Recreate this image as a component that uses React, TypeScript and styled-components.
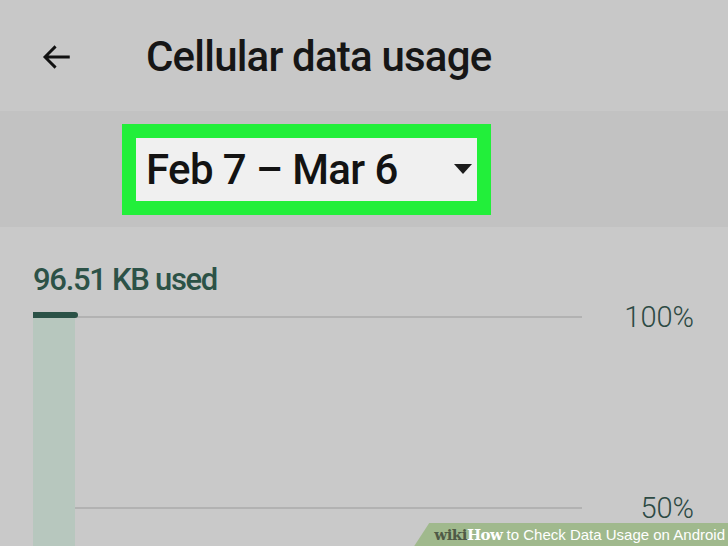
import React from "react";
import styled, { createGlobalStyle } from "styled-components";

const GlobalStyle = createGlobalStyle`
  body {
    margin: 0;
    background: #c9c9c9;
    font-family: Roboto, "Noto Sans", sans-serif;
  }
`;

const Screen = styled.div`
  position: relative;
  width: 728px;
  height: 546px;
  overflow: hidden;
  background: #c9c9c9;
`;

const AppBar = styled.header`
  display: flex;
  align-items: center;
  height: 111px;
  padding: 2px 0 0 40px;
  box-sizing: border-box;
  background: #c8c8c8;
`;

const BackButton = styled.button`
  display: flex;
  width: 34px;
  height: 34px;
  padding: 0;
  border: 0;
  background: none;
  color: #111;
`;

const Title = styled.h1`
  margin: 0 0 0 72px;
  font-size: 42px;
  font-weight: 500;
  color: #161616;
  letter-spacing: -0.8px;
`;

const PeriodBand = styled.div`
  display: flex;
  align-items: center;
  height: 116px;
  padding-left: 122px;
  box-sizing: border-box;
  background: #c2c2c2;
`;

const PeriodPicker = styled.div`
  display: flex;
  align-items: center;
  justify-content: space-between;
  width: 369px;
  height: 91px;
  box-sizing: border-box;
  padding: 0 5px 0 10px;
  border: 14px solid #22ef3a;
  background: #f0f0f0;
`;

const PeriodText = styled.span`
  font-size: 42px;
  font-weight: 500;
  color: #131313;
  letter-spacing: -0.6px;
`;

const Caret = styled.span`
  width: 0;
  height: 0;
  border-left: 9px solid transparent;
  border-right: 9px solid transparent;
  border-top: 10px solid #1c1c1c;
`;

const Usage = styled.section`
  padding: 35px 0 0 33px;
`;

const UsedLabel = styled.div`
  font-size: 31px;
  font-weight: 500;
  color: #2c5247;
  line-height: 36px;
  letter-spacing: -1.3px;
`;

const Chart = styled.div`
  position: relative;
  margin-top: 4px;
  padding-right: 34px;
`;

const GridRow = styled.div<{ $gap: number }>`
  display: flex;
  align-items: center;
  height: 30px;
  margin-bottom: ${(p) => p.$gap}px;
`;

const GridLine = styled.div`
  flex: 0 0 549px;
  height: 2px;
  background: #b2b2b2;
`;

const GridLabel = styled.span`
  flex: 1;
  text-align: right;
  font-size: 29px;
  font-weight: 300;
  color: #2d4a44;
`;

const UsageBar = styled.div`
  position: absolute;
  left: 0;
  top: 14px;
  width: 42px;
  height: 300px;
  background: #b7c7be;

  &::before {
    content: "";
    position: absolute;
    top: -4px;
    left: 0;
    width: 45px;
    height: 6px;
    border-radius: 0 3px 3px 0;
    background: #2b5247;
  }
`;

const Watermark = styled.div`
  position: absolute;
  right: 0;
  bottom: 0;
  display: flex;
  align-items: center;
  height: 23px;
  padding: 0 3px 0 20px;
  background: #a0b98d;
  clip-path: polygon(15px 0, 100% 0, 100% 100%, 0 100%);
  font-size: 15px;
  color: #fff;
  white-space: nowrap;
`;

const WikiMark = styled.span<{ $light?: boolean }>`
  font-family: "DejaVu Serif", "Liberation Serif", serif;
  font-weight: 700;
  font-size: 15px;
  letter-spacing: -0.5px;
  color: ${(p) => (p.$light ? "#fff" : "#4f5a46")};
`;

const WatermarkText = styled.span`
  font-family: "Liberation Sans", Arial, sans-serif;
  margin-left: 4px;
`;

export default function App() {
  return (
    <Screen>
      <GlobalStyle />
      <AppBar>
        <BackButton aria-label="Back">
          <svg width="34" height="34" viewBox="0 0 24 24" fill="none">
            <path d="M21 12H3.8M11 4.5L3.5 12l7.5 7.5" stroke="currentColor" strokeWidth="2" />
          </svg>
        </BackButton>
        <Title>Cellular data usage</Title>
      </AppBar>

      <PeriodBand>
        <PeriodPicker>
          <PeriodText>Feb 7 – Mar 6</PeriodText>
          <Caret />
        </PeriodPicker>
      </PeriodBand>

      <Usage>
        <UsedLabel>96.51 KB used</UsedLabel>
        <Chart>
          <GridRow $gap={161}>
            <GridLine />
            <GridLabel>100%</GridLabel>
          </GridRow>
          <GridRow $gap={0}>
            <GridLine />
            <GridLabel>50%</GridLabel>
          </GridRow>
          <UsageBar />
        </Chart>
      </Usage>

      <Watermark>
        <WikiMark>wiki</WikiMark>
        <WikiMark $light>How</WikiMark>
        <WatermarkText>to Check Data Usage on Android</WatermarkText>
      </Watermark>
    </Screen>
  );
}
